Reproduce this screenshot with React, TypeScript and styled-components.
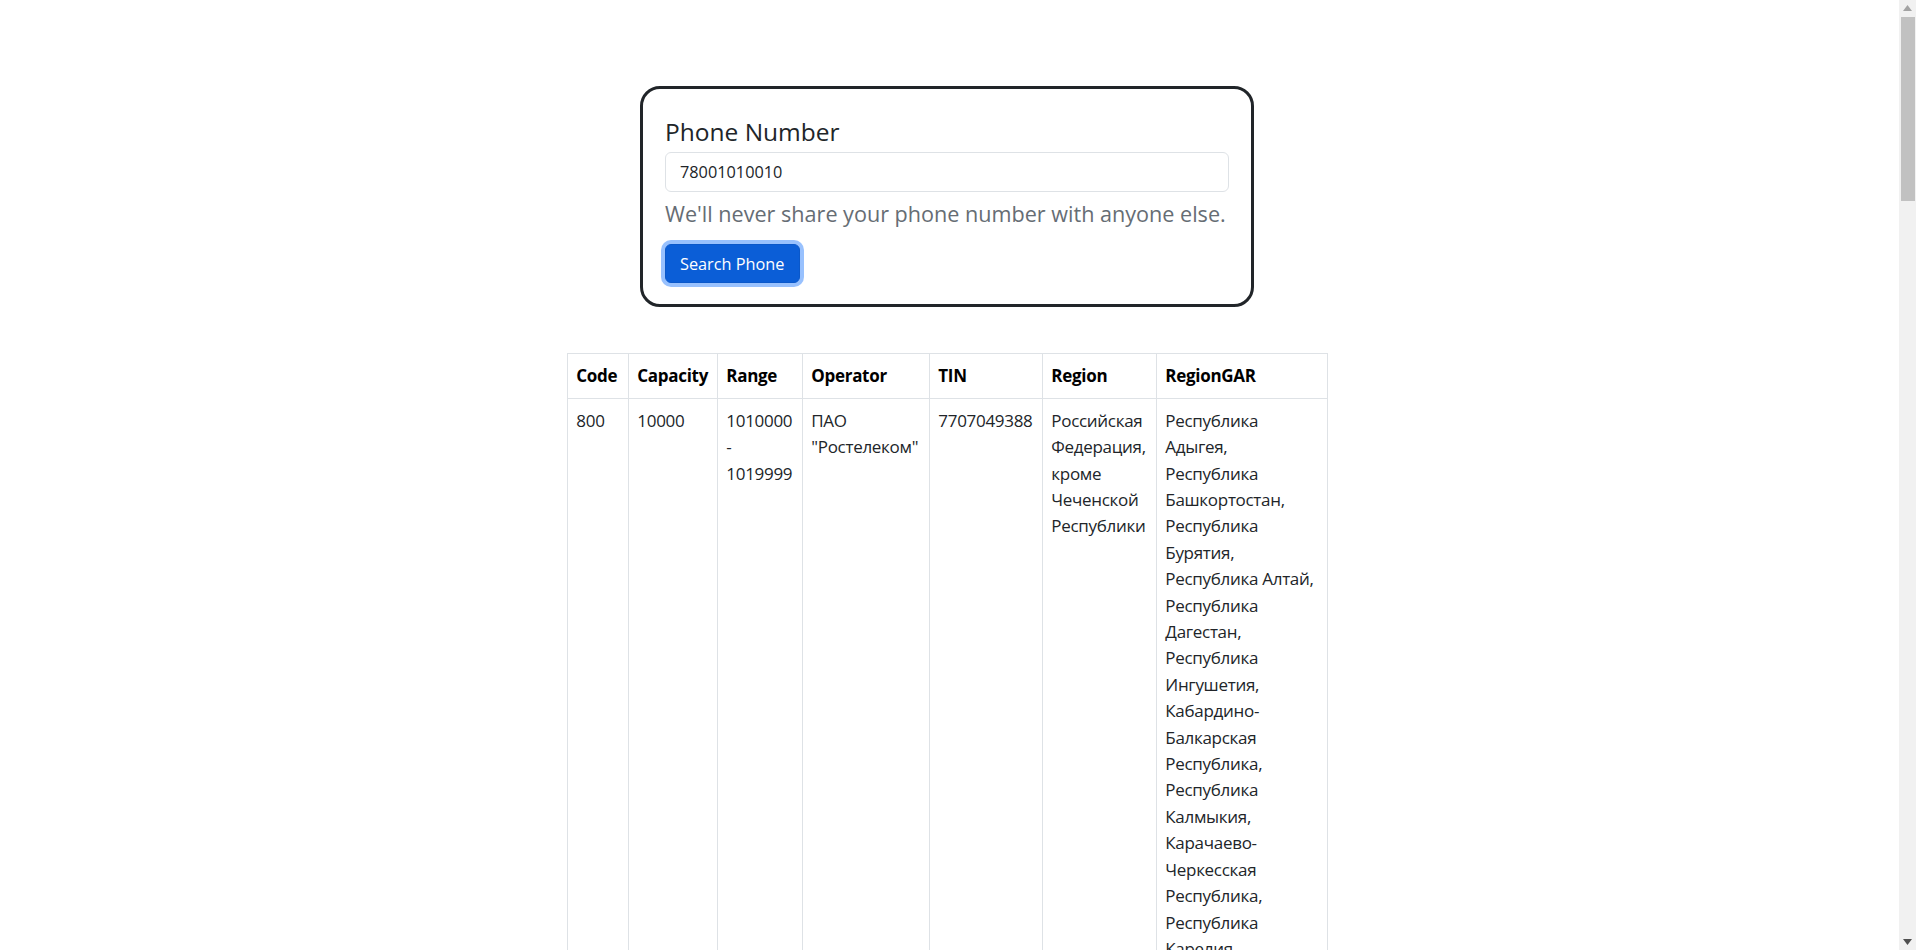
import React, { ChangeEvent, FC, useState } from 'react';
import styled, { createGlobalStyle } from 'styled-components';

const GlobalStyle = createGlobalStyle`
  * {
    box-sizing: border-box;
  }
  body {
    margin: 0;
    background: #fff;
    color: #212529;
    font-family: "Open Sans", "Noto Sans", sans-serif;
  }
`;

// room for the window scrollbar, drawn on top at the right edge
const Page = styled.div`
  display: flex;
  flex-direction: column;
  align-items: center;
  padding: 86px 22px 40px 0;
`;

const ScrollTrack = styled.div`
  position: fixed;
  top: 0;
  right: 0;
  width: 17px;
  height: 100vh;
  background: #f1f1f1;
`;

const ScrollThumb = styled.div`
  position: absolute;
  top: 17px;
  left: 2px;
  right: 1px;
  height: 184px;
  background: #c1c1c1;
`;

const ScrollArrow = styled.svg<{ $bottom?: boolean }>`
  position: absolute;
  left: 4px;
  ${(p) => (p.$bottom ? 'bottom: 5px;' : 'top: 5px;')}
  width: 9px;
  height: 6px;
`;

const Card = styled.form`
  width: 614px;
  border: 3px solid #212529;
  border-radius: 20px;
  padding: 25px 22px 21px;
`;

const Label = styled.label`
  display: block;
  font-size: 24.5px;
  line-height: 36px;
  margin-bottom: 2px;
`;

const Input = styled.input`
  display: block;
  width: 100%;
  height: 40px;
  padding: 0 14px;
  font-family: inherit;
  font-size: 16.3px;
  color: #212529;
  border: 1px solid #dee2e6;
  border-radius: 6px;
  outline: none;
`;

const HelpText = styled.div`
  margin-top: 7px;
  font-size: 21.6px;
  line-height: 30px;
  color: #666d74;
`;

const SearchButton = styled.button`
  display: block;
  margin-top: 15px;
  height: 39px;
  padding: 0 14px;
  font-family: inherit;
  font-size: 16.3px;
  color: #fff;
  background: #0b5ed7;
  border: 1px solid #0a58ca;
  border-radius: 6px;
  box-shadow: 0 0 0 4px rgba(49, 132, 253, 0.5);
  cursor: pointer;
`;

const Table = styled.table`
  margin-top: 46px;
  width: 760px;
  table-layout: fixed;
  border-collapse: collapse;
  font-size: 17px;
  line-height: 26.4px;
  letter-spacing: -0.3px;
`;

const Th = styled.th`
  padding: 8.8px;
  border: 1px solid #dee2e6;
  text-align: left;
  vertical-align: top;
  font-weight: 700;
  color: #000;
`;

const Td = styled.td`
  padding: 8.8px;
  border: 1px solid #dee2e6;
  vertical-align: top;
  color: #212529;
`;

interface IRange {
  code: string;
  capacity: string;
  range: string;
  operator: string;
  tin: string;
  region: string;
  regionGar: string[];
}

const columns = [
  { title: 'Code', width: 61 },
  { title: 'Capacity', width: 89 },
  { title: 'Range', width: 85 },
  { title: 'Operator', width: 127 },
  { title: 'TIN', width: 113 },
  { title: 'Region', width: 114 },
  { title: 'RegionGAR', width: 171 },
];

const regions = [
  'Республика Адыгея', 'Республика Башкортостан', 'Республика Бурятия', 'Республика Алтай',
  'Республика Дагестан', 'Республика Ингушетия', 'Кабардино-Балкарская Республика',
  'Республика Калмыкия', 'Карачаево-Черкесская Республика', 'Республика Карелия',
  'Республика Коми', 'Республика Марий Эл', 'Республика Мордовия', 'Республика Саха (Якутия)',
  'Республика Северная Осетия - Алания', 'Республика Татарстан', 'Республика Тыва',
  'Удмуртская Республика', 'Республика Хакасия', 'Чувашская Республика - Чувашия',
  'Алтайский край', 'Краснодарский край', 'Красноярский край', 'Приморский край',
  'Ставропольский край', 'Хабаровский край', 'Амурская область', 'Архангельская область',
  'Астраханская область', 'Белгородская область', 'Брянская область', 'Владимирская область',
  'Волгоградская область', 'Вологодская область', 'Воронежская область', 'Ивановская область',
  'Иркутская область', 'Калининградская область', 'Калужская область', 'Камчатский край',
  'Кемеровская область - Кузбасс', 'Кировская область', 'Костромская область',
  'Курганская область', 'Курская область', 'Ленинградская область', 'Липецкая область',
  'Магаданская область', 'Московская область', 'Мурманская область', 'Нижегородская область',
  'Новгородская область', 'Новосибирская область', 'Омская область', 'Оренбургская область',
  'Орловская область', 'Пензенская область', 'Пермский край', 'Псковская область',
  'Ростовская область', 'Рязанская область', 'Самарская область', 'Саратовская область',
  'Сахалинская область', 'Свердловская область', 'Смоленская область', 'Тамбовская область',
  'Тверская область', 'Томская область', 'Тульская область', 'Тюменская область',
  'Ульяновская область', 'Челябинская область', 'Забайкальский край', 'Ярославская область',
  'г. Москва', 'г. Санкт-Петербург', 'Еврейская автономная область',
  'Ненецкий автономный округ', 'Ханты-Мансийский автономный округ - Югра',
  'Чукотский автономный округ', 'Ямало-Ненецкий автономный округ', 'Республика Крым',
  'г. Севастополь',
];

const results: IRange[] = [
  {
    code: '800',
    capacity: '10000',
    range: '1010000 - 1019999',
    operator: 'ПАО "Ростелеком"',
    tin: '7707049388',
    region: 'Российская Федерация, кроме Чеченской Республики',
    regionGar: regions,
  },
];

const App: FC = () => {
  const [phone, setPhone] = useState<string>('78001010010');

  const handleChange = (event: ChangeEvent<HTMLInputElement>): void => {
    setPhone(event.target.value);
  };

  return (
    <Page>
      <GlobalStyle />
      <Card onSubmit={(e) => e.preventDefault()}>
        <Label htmlFor="phone">Phone Number</Label>
        <Input id="phone" type="text" value={phone} onChange={handleChange} />
        <HelpText>We'll never share your phone number with anyone else.</HelpText>
        <SearchButton type="submit">Search Phone</SearchButton>
      </Card>
      <Table>
        <colgroup>
          {columns.map((col) => (
            <col key={col.title} style={{ width: col.width }} />
          ))}
        </colgroup>
        <thead>
          <tr>
            {columns.map((col) => (
              <Th key={col.title}>{col.title}</Th>
            ))}
          </tr>
        </thead>
        <tbody>
          {results.map((row, key) => (
            <tr key={key}>
              <Td>{row.code}</Td>
              <Td>{row.capacity}</Td>
              <Td>{row.range}</Td>
              <Td>{row.operator}</Td>
              <Td>{row.tin}</Td>
              <Td>{row.region}</Td>
              <Td>{row.regionGar.join(', ')}</Td>
            </tr>
          ))}
        </tbody>
      </Table>
      <ScrollTrack>
        <ScrollArrow viewBox="0 0 9 6">
          <path d="M4.5 0 L9 6 L0 6 Z" fill="#a3a3a3" />
        </ScrollArrow>
        <ScrollThumb />
        <ScrollArrow $bottom viewBox="0 0 9 6">
          <path d="M0 0 L9 0 L4.5 6 Z" fill="#505050" />
        </ScrollArrow>
      </ScrollTrack>
    </Page>
  );
};

export default App;
